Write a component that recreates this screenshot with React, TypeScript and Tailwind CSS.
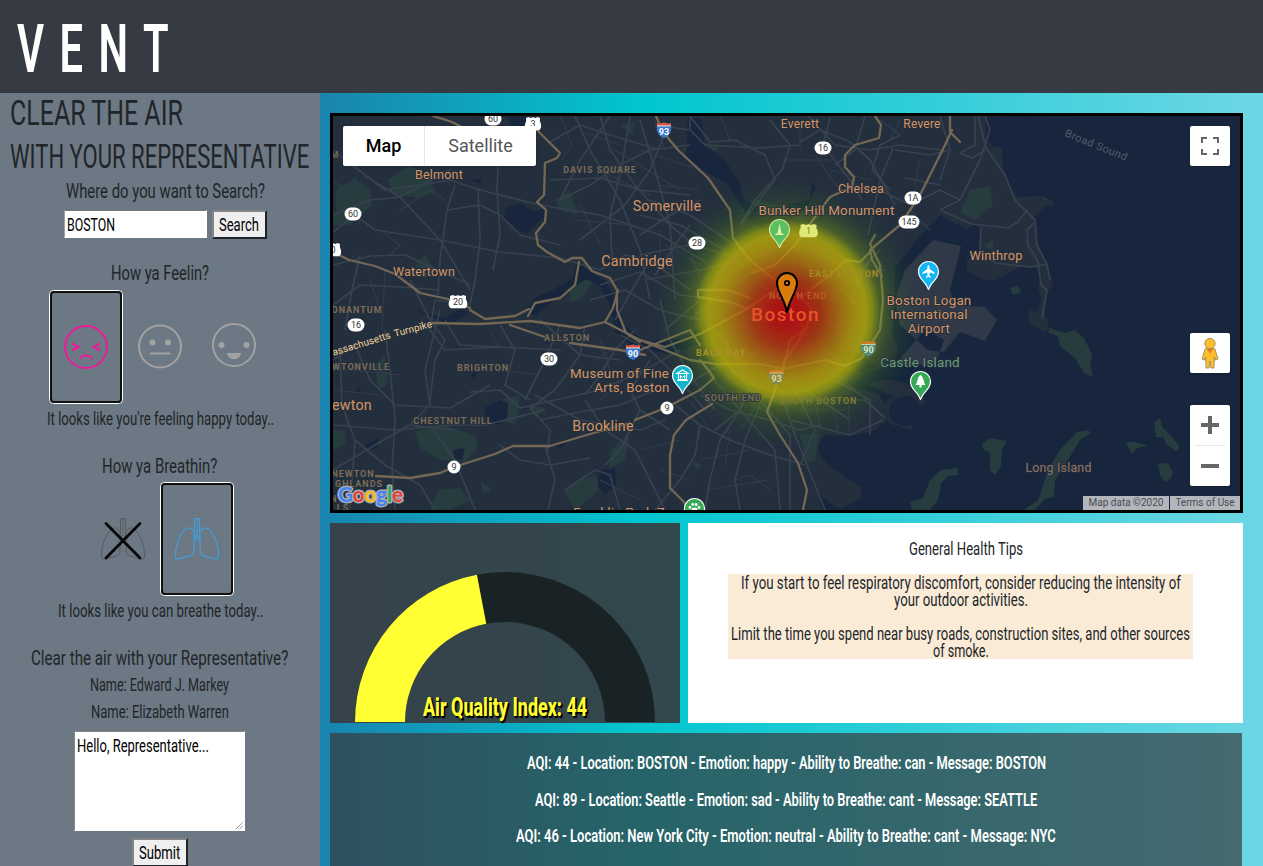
import { useLayoutEffect, useRef, type ReactNode } from 'react';

/* Condensed single-line text: squeezed horizontally to fill the width of its box. */
function Fit({ className, children }: { className: string; children: ReactNode }) {
  const box = useRef<HTMLSpanElement>(null);
  const ink = useRef<HTMLSpanElement>(null);
  useLayoutEffect(() => {
    if (box.current && ink.current) {
      ink.current.style.transform = `scaleX(${box.current.clientWidth / ink.current.offsetWidth})`;
    }
  }, []);
  return (
    <span ref={box} className={`block shrink-0 overflow-visible whitespace-nowrap ${className}`}>
      <span ref={ink} className="inline-block origin-left">
        {children}
      </span>
    </span>
  );
}

const localRoads = [
  'M333 150 L352 165 L385 190 L420 185 L450 180 L480 190 L540 205 L600 215 L660 235 L705 262',
  'M333 215 L370 200 L400 197 L450 170', 'M365 176 L400 197 L440 240 L470 290', 'M333 232 L355 215 L375 230 L440 240 L500 252 L560 258 L600 270',
  'M455 185 L447 210 L440 260 L438 295', 'M447 210 L480 205 L500 215 L520 235 L560 245', 'M478 190 L480 240 L475 280 L470 305',
  'M500 130 L497 190 L500 235 L493 270', 'M550 180 L600 178 L640 190 L690 195', 'M560 200 L590 185 L620 165 L650 150 L690 145',
  'M575 116 L590 150 L620 200 L640 250 L650 300', 'M600 116 L610 150 L635 185 L670 225 L700 250', 'M640 120 L655 170 L670 225 L675 300',
  'M550 142 L580 125 L610 135 L660 150', 'M610 116 L580 160 L560 200', 'M630 116 L622 165 L610 215 L612 260', 'M666 130 L650 170 L625 205 L580 240',
  'M655 125 L690 130 L705 145 L760 148 L800 145', 'M690 116 L710 142 L735 140 L765 155 L775 180 L740 225', 'M770 120 L790 145 L782 170 L755 200 L742 222',
  'M800 142 L820 130 L850 142 L870 160 L895 205', 'M808 116 L835 145 L870 150 L900 145 L940 150', 'M830 118 L823 145 L850 180 L862 200',
  'M865 116 L855 150 L835 165', 'M890 190 L872 170 L880 145 L900 135', 'M333 265 L370 256 L405 255 L470 285', 'M333 305 L360 285 L400 287 L440 290',
  'M360 255 L352 290 L345 330', 'M410 280 L430 320 L445 340 L435 360 L430 400', 'M470 305 L435 300 L430 330 L445 350 L500 347 L560 350',
  'M500 325 L515 350 L505 385 L530 400', 'M560 325 L545 360 L525 400', 'M585 325 L580 355 L555 390 L530 408 L550 430 L547 455',
  'M540 320 L580 355 L620 360', 'M445 320 L460 345 L500 347', 'M470 392 L500 390 L520 408 L600 390 L645 370 L680 350',
  'M333 360 L355 345 L370 380 L395 405 L450 408 L490 385', 'M340 350 L342 405 L355 440 L350 510', 'M385 330 L390 370 L395 420 L392 470 L395 510',
  'M333 425 L395 430 L450 425 L485 425 L545 410', 'M430 425 L455 460 L475 510', 'M440 310 L425 370 L430 405 L410 425',
  'M355 440 L385 465 L420 485 L435 510', 'M333 470 L375 445 L410 425 L455 430', 'M500 445 L520 460 L550 465 L590 458',
  'M545 445 L555 480 L548 510', 'M585 400 L605 430 L635 450 L650 480 L665 510', 'M540 420 L580 412 L620 405 L655 390', 'M535 395 L580 420 L640 430 L665 420',
  'M650 360 L630 390 L640 410 L670 430', 'M660 300 L670 340 L690 375 L715 410', 'M640 410 L620 450 L605 465', 'M565 490 L595 470 L610 475 L620 510',
  'M635 330 L615 350 L600 375 L585 395', 'M620 335 L650 350 L680 380 L705 410', 'M675 405 L700 425 L730 440 L770 455 L805 465',
  'M700 425 L695 455 L680 480 L655 510', 'M740 410 L720 440 L710 480 L705 510', 'M760 405 L745 440 L735 480 L740 510',
  'M715 330 L735 355 L750 385 L740 410 L715 430', 'M680 390 L710 370 L745 355 L780 350', 'M700 395 L730 410 L770 420 L800 430 L820 425',
  'M710 375 L740 410 L775 450 L780 510', 'M725 360 L755 395 L790 435 L790 510', 'M745 348 L780 390 L795 435 L825 510', 'M790 420 L850 435 L883 420',
  'M800 400 L865 400 L885 418', 'M805 390 L850 420', 'M790 380 L815 430 L800 465', 'M835 380 L870 400 L870 435', 'M640 255 L690 245 L730 255', 'M645 280 L700 270 L745 260',
  'M650 200 L690 215 L735 245', 'M640 215 L680 225 L725 250', 'M640 235 L670 215 L700 200', 'M655 275 L675 245 L690 225', 'M600 270 L625 255 L650 260 L690 290',
  'M600 285 L640 272 L680 295 L720 300', 'M590 300 L625 290 L660 310 L700 320', 'M615 320 L635 285 L650 260', 'M665 330 L700 300 L735 270 L770 250',
  'M690 320 L725 290 L760 265', 'M740 365 L765 345 L785 330 L790 290', 'M755 300 L780 300 L800 290', 'M760 285 L810 310', 'M745 318 L800 325',
  'M805 265 L840 285 L860 310', 'M820 250 L850 275 L885 270', 'M830 300 L880 250', 'M850 300 L870 260', 'M868 235 L880 180 L893 148',
  'M940 210 L960 200 L980 160 L990 130 L985 116', 'M975 116 L975 145 L960 153 L972 158 L985 150', 'M978 116 L986 148 L1005 175 L1015 200 L1035 220 L1037 245 L1047 265 L1050 280',
  'M940 210 L972 224 L1008 228 L1018 222 L1027 210', 'M981 228 L980 250 L995 263 L1030 267 L1048 264', 'M1035 222 L1027 230 L1028 245 L1038 262 L1041 285 L1047 290 L1042 318',
  'M880 190 L910 205 L940 190 L960 200', 'M905 178 L940 185', 'M895 150 L930 155 L950 150', 'M940 116 L950 150 L940 180', 'M690 130 L690 116',
];
const minorRoads = [
  'M560 116 L572 145 L562 160', 'M585 133 L620 145', 'M600 170 L650 195', 'M615 150 L680 190', 'M575 220 L630 225', 'M580 205 L600 245', 'M640 150 L700 170', 'M660 185 L700 190',
  'M660 230 L660 270', 'M685 235 L700 280', 'M665 245 L700 265', 'M690 260 L735 310', 'M700 255 L740 300', 'M716 250 L750 290', 'M730 370 L790 410', 'M720 385 L780 420',
  'M700 385 L720 400', 'M690 400 L710 430', 'M760 370 L730 400', 'M775 380 L740 430', 'M800 345 L855 390', 'M815 340 L850 370', 'M820 370 L845 345', 'M800 410 L845 410',
  'M812 395 L822 430', 'M830 395 L838 430', 'M848 400 L850 435', 'M730 430 L725 465', 'M700 460 L750 450', 'M705 490 L770 480', 'M735 480 L750 475 L770 490', 'M660 470 L690 480',
  'M640 450 L680 440', 'M600 340 L610 370', 'M620 345 L595 360', 'M635 370 L600 400', 'M350 370 L400 375', 'M333 390 L380 395', 'M370 280 L380 310', 'M385 270 L382 330',
  'M500 370 L540 375', 'M490 330 L500 350', 'M600 480 L640 500', 'M445 200 L430 190 L400 210', 'M333 180 L350 195 L360 225', 'M380 230 L400 245 L390 255', 'M655 120 L665 150', 'M720 116 L730 140',
  'M780 160 L830 160', 'M830 170 L870 180', 'M815 155 L840 190', 'M800 130 L800 150', 'M880 120 L900 135', 'M900 120 L890 140', 'M910 210 L930 230', 'M920 160 L915 185',
];
const highways = [
  'M433 116 L452 122 L470 131', 'M537 130 L560 153 L557 158 L545 163 L544 195 L537 202 L546 210 L545 222 L536 233 L538 245 L547 252 L565 262 L572 258 L582 258 L592 271 L610 278 L617 290 L617 310 L626 333 L640 342',
  'M333 252 L349 260 L375 266 L395 274 L415 289 L420 293 L448 299 L470 308', 'M579 262 L575 285 L560 298 L535 303 L528 316',
  'M433 323 L480 324 L530 321 L580 328 L605 322 L640 340 L690 360 L715 364 L760 364 L783 369 L825 360 L845 366 L862 358 L880 330 L883 300 L880 265 L870 244 L875 235',
  'M470 310 L485 319 L515 316 L529 309', 'M510 325 L545 337', 'M570 343 L620 350 L645 355', 'M605 322 L613 308 L618 290',
  'M376 476 L410 478 L440 473 L454 467 L495 454 L513 446 L550 446 L590 434 L630 423', 'M635 420 L665 408 L700 390 L714 378 L709 371 L700 360',
  'M656 116 L663 132 L678 150 L708 178 L730 210 L733 238 L750 260 L770 276 L790 290 L793 310 L805 330 L796 345 L785 360 L775 390 L767 412 L780 435 L798 463 L807 490 L803 510',
  'M712 404 L686 420 L674 435 L670 455 L670 488 L684 502 L688 510', 'M875 116 L881 125 L879 138 L855 145 L845 155 L845 167 L854 177 L852 187 L830 197 L815 217 L795 245 L775 265 L752 273',
  'M952 130 L945 145 L920 195 L900 225 L870 250 L872 260 L882 276', 'M950 116 L950 132 L960 142', 'M640 340 L665 347 L700 334 L745 310 L775 290',
  'M745 308 L730 302 L698 297 L698 290 L728 290 L750 298', 'M872 250 L860 262 L846 260 L830 275 L810 290 L800 300', 'M805 330 L812 308 L792 290', 'M783 369 L790 340 L808 327', 'M700 345 L690 330 L640 350',
];
const parks = [
  'M335 190 L355 178 L370 190 L372 205 L350 225 L337 225Z', 'M388 180 L410 165 L430 178 L435 192 L420 198 L392 194Z', 'M333 210 L350 215 L355 222 L333 226Z', 'M555 200 L570 190 L578 215 L560 210Z',
  'M620 125 L635 122 L632 135Z', 'M570 285 L585 265 L598 275 L580 300 L570 302Z', 'M415 265 L425 255 L435 270 L425 278Z', 'M415 432 L440 424 L475 435 L478 447 L465 462 L440 460 L420 448Z',
  'M333 430 L345 430 L346 445 L333 450Z', 'M375 365 L385 355 L388 385 L378 390Z', 'M438 490 L460 488 L470 500 L450 510 L430 510Z', 'M563 490 L575 482 L595 475 L600 490 L575 510Z', 'M610 452 L630 430 L625 460 L610 468Z',
  'M680 150 L700 140 L720 148 L705 155Z', 'M800 435 L820 433 L815 460 L806 465Z', 'M690 460 L702 465 L698 470Z', 'M738 210 L760 200 L780 208 L765 218Z', 'M970 190 L990 186 L993 205 L975 220 L960 212Z', 'M985 245 L993 240 L994 248 L988 250Z',
  'M1040 196 L1047 197 L1046 201Z', 'M1030 298 L1037 300 L1034 307 L1028 306Z', 'M500 400 L520 395 L515 425 L500 420Z', 'M481 480 L491 490 L482 494Z', 'M920 386 L929 390 L928 403 L921 407Z', 'M530 405 L545 408 L535 418Z',
];
const waters = [
  'M506 207 L520 203 L534 212 L545 208 L545 217 L535 225 L528 234 L518 230 L504 217Z', 'M508 116 L530 116 L525 130 L512 130Z', 'M470 180 L482 178 L481 184Z', 'M484 408 L500 400 L508 403 L507 420 L497 425 L486 418Z',
  'M453 450 L465 448 L462 460 L455 459Z', 'M365 445 L378 438 L378 448 L368 450Z', 'M356 390 L361 386 L359 395Z', 'M600 470 L615 468 L616 485 L605 495 L598 486Z', 'M553 445 L568 440 L562 448Z', 'M470 375 L478 370 L475 380Z',
];
const islands = [
  'M1050 328 L1058 331 L1066 333 L1074 330 L1084 338 L1092 355 L1090 365 L1093 377 L1084 373 L1075 358 L1060 346 L1058 336 L1048 333Z',
  'M982 444 L990 438 L1007 441 L1002 450 L1001 466 L995 475 L990 470 L990 453 L983 449Z',
  'M1077 432 L1088 430 L1091 433 L1080 440 L1071 455 L1063 468 L1055 480 L1054 497 L1045 499 L1035 510 L1024 510 L1038 500 L1048 470 L1060 450Z',
  'M1154 422 L1160 418 L1162 427 L1174 439 L1180 448 L1176 451 L1167 445 L1163 437 L1156 437Z', 'M1126 442 L1135 442 L1148 446 L1137 448 L1132 454Z', 'M1158 464 L1168 463 L1173 472 L1171 478 L1165 482 L1160 475Z',
  'M910 502 L923 498 L930 480 L940 470 L958 468 L958 475 L948 476 L941 483 L938 500 L930 510 L912 510Z', 'M1010 288 L1018 286 L1021 292 L1013 295Z',
];

type Lbl = [string, number, number, number, string?];
const towns: Lbl[] = [
  ['Everett', 800, 127.5, 12], ['Revere', 922, 127.5, 12], ['Belmont', 439, 178.5, 12.5], ['Chelsea', 861, 193, 12.5], ['Somerville', 667, 211, 14.3],
  ['Bunker Hill Monument', 826.5, 215, 13.4], ['Cambridge', 637, 266, 14.3], ['Watertown', 424, 275.5, 12.5], ['Winthrop', 996, 260, 12.8], ['Boston Logan', 929, 305, 13.4],
  ['International', 929, 319, 13.4], ['Airport', 929, 333, 13.4], ['Museum of Fine', 619.5, 378, 13.4], ['Arts, Boston', 632, 392, 13.4], ['Brookline', 603, 431, 14.3],
  ['ewton', 352, 410, 14.3], ['Franklin Park Z', 619, 517, 13.4],
];
const areas: Lbl[] = [
  ['DAVIS SQUARE', 600, 173, 9], ['M', 335, 158, 9], ['ONANTUM', 357, 313, 9], ['WTONVILLE', 361, 370, 9], ['ALLSTON', 567, 341, 9], ['BRIGHTON', 483, 371, 9],
  ['CHESTNUT HILL', 453, 424, 9], ['NEWTON', 353, 477, 9], ['GHLANDS', 359, 487, 9], ['N', 334, 502, 9], ['LS', 343, 511, 9], ['SOUTH END', 733, 401, 9],
];
const hotAreas: [string, number, number, string][] = [
  ['BACK BAY', 721, 356, '#a89028'], ['EAST BOSTON', 844, 277, '#a28a22'], ['NORTH END', 798, 299, '#b55a26'], ['SOUTH BOSTON', 818, 404, '#7d7a35'],
];
const shields: [string, number, number][] = [
  ['60', 493, 119], ['3', 533, 124], ['60', 353, 214], ['28', 697, 243], ['16', 823, 148], ['1A', 913, 198], ['145', 909, 222], ['20', 458, 302], ['16', 356, 325], ['30', 549, 359], ['9', 667, 408], ['9', 454, 467], ['0', 333, 250],
];
const interstates: [string, number, number][] = [['93', 664, 130], ['90', 633, 352]];
const hotInterstates: [string, number, number][] = [['93', 776.5, 377], ['90', 868.5, 348.5]];

function Pin({ x, y, fill, children }: { x: number; y: number; fill: string; children: ReactNode }) {
  return (
    <g transform={`translate(${x} ${y})`}>
      <path d="M0 18 L-2 14 C-4 10 -10 7 -10 0 A10 10 0 0 1 10 0 C10 7 4 10 2 14Z" fill={fill} stroke="#fff" strokeWidth="1.2" strokeLinejoin="round" />
      {children}
    </g>
  );
}

function Interstate({ x, y, label, blue, red, ink }: { x: number; y: number; label: string; blue: string; red: string; ink: string }) {
  return (
    <g transform={`translate(${x} ${y})`}>
      <path d="M-7 -5 H7 C8 1 6 6 0 8 C-6 6 -8 1 -7 -5Z" fill={blue} />
      <path d="M-7 -4 V-7 L-4 -6.500 L0 -7.500 L4 -6.500 L7 -7 V-4Z" fill={red} />
      <path d="M-7 -4 H7" stroke={ink} strokeWidth=".8" />
      <text y="4.500" fontSize="9" fontWeight="700" textAnchor="middle" fill={ink}>{label}</text>
    </g>
  );
}

const usShield = 'M-7 -6 L-4.500 -7 L-2.500 -6 L0 -6.800 L2.500 -6 L4.500 -7 L7 -6 L6.800 -3 C8.800 1 8.500 5 6 6.300 H-6 C-8.500 5 -8.800 1 -6.800 -3Z';

function CityMap() {
  return (
    <svg viewBox="333 116 907 394" className="block h-full w-full font-['Roboto',sans-serif]">
      <defs>
        <radialGradient id="heat">
          <stop offset="0" stopColor="#b80a10" stopOpacity=".95" />
          <stop offset=".12" stopColor="#b81410" stopOpacity=".9" />
          <stop offset=".26" stopColor="#b83a0c" stopOpacity=".82" />
          <stop offset=".4" stopColor="#b87a0a" stopOpacity=".8" />
          <stop offset=".5" stopColor="#bc9f08" stopOpacity=".8" />
          <stop offset=".59" stopColor="#bab008" stopOpacity=".8" />
          <stop offset=".64" stopColor="#a8b008" stopOpacity=".68" />
          <stop offset=".7" stopColor="#84a80c" stopOpacity=".38" />
          <stop offset=".82" stopColor="#4c8c12" stopOpacity=".17" />
          <stop offset="1" stopColor="#206010" stopOpacity="0" />
        </radialGradient>
      </defs>
      <rect x="333" y="116" width="907" height="394" fill="#242f3e" />
      <g fill="#263c3f">{parks.map((d) => <path key={d} d={d} />)}</g>
      <g fill="#17263c">
        <path d="M985 116 L987 140 L993 147 L1002 148 L1003 168 L1012 190 L1018 197 L1040 196 L1053 200 L1054 205 L1044 207 L1034 217 L1038 245 L1048 265 L1053 284 L1044 298 L1045 315 L1050 330 L1240 330 L1240 116Z" />
        <path d="M940 215 L966 229 L975 224 L980 228 L979 250 L967 260 L967 270 L984 280 L994 281 L1010 272 L1023 266 L1035 268 L1042 276 L1038 288 L1042 300 L1035 316 L1042 326 L1050 330 L1240 330 L1240 510 L822 510 L817 492 L830 503 L840 509 L861 498 L861 487 L848 479 L842 474 L829 466 L820 455 L818 445 L825 435 L852 436 L875 430 L888 420 L887 407 L878 394 L850 387 L865 372 L892 366 L898 350 L892 330 L895 300 L895 268 L918 238Z" />
        <path d="M688 116 L702 120 L705 145 L725 160 L738 180 L745 200 L775 215 L790 204 L810 200 L812 182 L816 187 L808 207 L789 220 L790 245 L805 265 L817 288 L821 310 L841 342 L877 367 L862 373 L833 354 L813 343 L804 320 L789 290 L779 265 L770 235 L750 220 L739 203 L728 184 L703 170 L686 157Z" />
        <path d="M525 311 L536 297 L553 290 L573 278 L577 262 L584 267 L605 281 L618 302 L624 325 L645 342 L682 339 L708 322 L744 300 L758 285 L765 289 L742 312 L705 341 L672 354 L635 348 L616 333 L609 303 L600 286 L586 279 L555 300 L535 316Z" />
        <path d="M415 310 L445 318 L460 309 L469 313 L450 325Z" />
        {waters.map((d) => <path key={d} d={d} />)}
      </g>
      <path d="M933 240 L961 246 L950 290 L955 305 L985 307 L997 320 L985 341 L960 332 L944 352 L928 350 L900 325 L895 300 L905 270 Z M895 365 L935 365 L944 340 L925 329Z" fill="#2f3948" />
      <path d="M868 385 C875 378 900 377 920 391 L926 402 L914 411 L912 430 L890 424 C882 410 882 400 895 397 Z" fill="#242f3e" />
      <ellipse cx="905" cy="411" rx="16" ry="15" fill="#17263c" />
      <path d="M1028 310 L1040 312 L1050 328 L1045 332 L1031 325Z" fill="#242f3e" />
      <g fill="#263c3f">{islands.map((d) => <path key={d} d={d} />)}</g>
      <g fill="none" stroke="#323c4a" strokeWidth="1.1">{minorRoads.map((d) => <path key={d} d={d} />)}</g>
      <g fill="none" stroke="#38414e" strokeWidth="1.7" strokeLinejoin="round">{localRoads.map((d) => <path key={d} d={d} />)}</g>
      <g fill="none" stroke="#746855" strokeWidth="2.3" strokeLinejoin="round" strokeLinecap="round">{highways.map((d) => <path key={d} d={d} />)}</g>
      <circle cx="787" cy="313" r="134" fill="url(#heat)" />
      <g fill="#7b6c56" fontSize="9" fontWeight="700" letterSpacing=".95" textAnchor="middle">
        <g stroke="#242f3e" strokeWidth="1.5" paintOrder="stroke">
          {areas.map(([t, x, y]) => <text key={t} x={x} y={y}>{t}</text>)}
        </g>
        {hotAreas.map(([t, x, y, c]) => <text key={t} x={x} y={y} fill={c}>{t}</text>)}
      </g>
      <g fill="#d59563" textAnchor="middle" stroke="#242f3e" strokeWidth="1.5" paintOrder="stroke" letterSpacing=".2">
        {towns.map(([t, x, y, s]) => <text key={t} x={x} y={y} fontSize={s}>{t}</text>)}
        <text x="785.500" y="321" fontSize="19" fontWeight="500" letterSpacing="1.5" fill="#e8542a" stroke="none">Boston</text>
        <text x="920" y="367" fontSize="13.400" fill="#6b9a76">Castle Island</text>
        <text x="1058.500" y="472" fontSize="12.400" fill="#8f7163">Long Island</text>
      </g>
      <text x="1064" y="136" fontSize="11" fill="#515c6d" letterSpacing=".35" transform="rotate(22 1064 136)">Broad Sound</text>
      <text x="331" y="356.500" fontSize="10" fill="#f3d19c" transform="rotate(-17 331 356.500)" textLength="63">lassachusetts</text>
      <text x="395" y="337" fontSize="10" fill="#f3d19c" transform="rotate(-15 395 337)" textLength="39">Turnpike</text>
      {shields.map(([t, x, y]) => {
        const w = t.length * 4 + 9;
        return (
          <g key={`${t}${x}`} transform={`translate(${x} ${y})`}>
            {['20', '0', '3'].includes(t) ? <path d={usShield} fill="#fff" transform={t === '20' ? 'scale(1.15 1)' : undefined} /> : <rect x={-w / 2} y={-6.500} width={w} height="13" rx="6.500" fill="#fff" />}
            <text y={3.300} fontSize="9" textAnchor="middle" fill="#333">{t}</text>
          </g>
        );
      })}
      {interstates.map(([t, x, y]) => <Interstate key={x} x={x} y={y} label={t} blue="#3a76c9" red="#d8574c" ink="#fff" />)}
      {hotInterstates.map(([t, x, y]) => <Interstate key={x} x={x} y={y} label={t} blue={t === '93' ? '#7f8a5c' : '#4f8a85'} red="#cf7a25" ink={t === '93' ? '#e6d878' : '#dbe6b0'} />)}
      <g transform="translate(808.500 231)">
        <path d={usShield} fill="#e2e878" transform="scale(1.15 1)" />
        <text y="3.300" fontSize="9" textAnchor="middle" fill="#7a8030">1</text>
      </g>
      <g transform="translate(779.500 229.500)">
        <path d="M0 18 L-2 14 C-4 10 -10 7 -10 0 A10 10 0 0 1 10 0 C10 7 4 10 2 14Z" fill="#5abf5e" stroke="#d3e6a0" strokeWidth="1.200" strokeLinejoin="round" />
        <path d="M0 -6 L1 -1 L2 4 H4 V5.500 H-4 V4 H-2 L-1 -1Z" fill="#e6f0a8" />
      </g>
      <Pin x={928.500} y={271.500} fill="#12b5f5">
        <path d="M0 -6.500 C1 -6.500 1.200 -4 1.200 -2.500 L6 1 V2.500 L1.200 1 L1 4 L2.500 5.300 V6.300 L0 5.600 L-2.500 6.300 V5.300 L-1 4 L-1.200 1 L-6 2.500 V1 L-1.200 -2.500 C-1.200 -4 -1 -6.500 0 -6.500Z" fill="#fff" />
      </Pin>
      <Pin x={682.500} y={375.500} fill="#12b5cb">
        <path d="M-5.500 -2 L0 -5.500 L5.500 -2Z M-4 -1.500 V4 H4 V-1.500 M-5.500 5 H5.500" fill="none" stroke="#fff" strokeWidth="1.2" />
        <path d="M-2 3 V0 L0 2 L2 0 V3" fill="none" stroke="#fff" strokeWidth="1" />
      </Pin>
      <Pin x={920.500} y={381.500} fill="#34a853">
        <path d="M0 -7 L3 -3 H2 L4 0 H3 L5 3.500 H1 V6 H-1 V3.500 H-5 L-3 0 H-4 L-2 -3 H-3Z" fill="#fff" />
      </Pin>
      <Pin x={694.500} y={508.500} fill="#34a853">
        <g fill="#fff"><circle cx="-4.500" cy="-1" r="1.400" /><circle cx="-1.700" cy="-4" r="1.400" /><circle cx="1.700" cy="-4" r="1.400" /><circle cx="4.500" cy="-1" r="1.400" /><ellipse cy="1.500" rx="3" ry="2.500" /></g>
      </Pin>
      <path d="M787 313 C786 302 777 292 777 283 A10 10 0 0 1 797 283 C797 292 788 302 787 313Z" fill="#da7b0e" stroke="#000" strokeWidth="2" />
      <circle cx="787" cy="283" r="2.200" fill="#da7b0e" stroke="#000" strokeWidth="1.800" />
      <text x="338" y="502" fontSize="20.500" fontWeight="700" textLength="65" className="font-['Lato',sans-serif]" stroke="#a9adb5" strokeWidth="3" strokeLinejoin="round" paintOrder="stroke">
        <tspan fill="#4285f4">G</tspan><tspan fill="#ea4335">o</tspan><tspan fill="#fbbc05">o</tspan><tspan fill="#4285f4">g</tspan><tspan fill="#34a853">l</tspan><tspan fill="#ea4335">e</tspan>
      </text>
    </svg>
  );
}

function MapPanel() {
  return (
    <section className="relative h-[400px] w-[913px] overflow-hidden border-[3px] border-black bg-[#242f3e] font-['Roboto',sans-serif]">
      <CityMap />
      <div className="absolute left-[10px] top-[10px] flex h-10 w-[193px] items-center rounded-[2px] bg-white text-lg leading-10 shadow">
        <span className="w-[82px] border-r border-[#e6e6e6] text-center font-medium text-black">Map</span>
        <span className="flex-1 text-center text-[#565656]">Satellite</span>
      </div>
      <div className="absolute right-[10px] top-[10px] flex size-10 items-center justify-center rounded-[2px] bg-white shadow">
        <svg viewBox="0 0 18 18" className="size-[18px]" fill="#666"><path d="M0 0V6H2V2H6V0Z M16 0H12V2H16V6H18V0Z M16 16H12V18H18V12H16Z M2 12H0V18H6V16H2Z" /></svg>
      </div>
      <div className="absolute right-[10px] top-[217px] flex size-10 items-center justify-center rounded-[2px] bg-white shadow">
        <svg viewBox="0 0 18 32" className="h-8 w-[18px]">
          <path d="M4 12 Q9 8 14 12 L17 22 L14.500 23 L13.500 20 L13 31 H10 L9 24 L8 31 H5 L4.500 20 L3.500 23 L1 22Z" fill="#fbbf2c" stroke="#948260" strokeWidth=".8" />
          <path d="M5.500 11.500 H12.500 L9 16.500Z" fill="#e2792c" />
          <circle cx="9" cy="6.500" r="5.200" fill="#fbbf2c" stroke="#948260" strokeWidth=".8" />
        </svg>
      </div>
      <div className="absolute right-[10px] top-[289px] flex h-[81px] w-10 flex-col items-center rounded-[2px] bg-white shadow">
        <svg viewBox="0 0 40 40" className="size-10"><path d="M11 20H29M20 11V29" stroke="#666" strokeWidth="4" /></svg>
        <div className="h-px w-[30px] bg-[#e6e6e6]" />
        <svg viewBox="0 0 40 40" className="size-10"><path d="M11 20H29" stroke="#666" strokeWidth="4" /></svg>
      </div>
      <div className="absolute bottom-0 right-0 flex h-[14px] gap-px text-center text-[10px] leading-[14px] text-[#4a4c51]">
        <span className="w-[86px] bg-[#b3b7bd]">Map data ©2020</span>
        <span className="w-[70px] bg-[#b3b7bd]">Terms of Use</span>
      </div>
    </section>
  );
}

const frame = (
  <g fill="none">
    <rect x=".5" y=".5" width="73" height="113" rx="4" stroke="#fff" />
    <rect x="2" y="2" width="70" height="110" rx="3" stroke="#101010" strokeWidth="2" />
  </g>
);

function Lungs({ color, width }: { color: string; width: number }) {
  const half = 'M34 51 C33 47 31 45.500 28 46 C20 49 15 65 15.500 75 C15.500 77 17 77 19 77 C24 75 29 75 32 73 C34 71 34 70 34 67Z';
  return (
    <g fill="none" stroke={color} strokeWidth={width}>
      <path d={half} />
      <path d={half} transform="matrix(-1 0 0 1 74 0)" />
      <path d="M34.500 55 V36.500 H39.500 V55 M34.500 38 H39.500 M37 40 V52 M33.500 57 L37 53 L40.500 57 M34 60 L37 56 L40 60" />
    </g>
  );
}

function Gauge() {
  return (
    <section className="relative h-[200px] w-[350px] bg-gradient-to-r from-[#36424a] to-[#31484d]">
      <svg viewBox="0 0 350 200" className="block h-full w-full">
        <path d="M25 199 A150 150 0 0 1 325 199 H275 A100 100 0 0 0 75 199Z" fill="#192225" />
        <path d="M25 199 A150 150 0 0 1 146.900 51.660 L156.260 100.770 A100 100 0 0 0 75 199Z" fill="#ffff33" />
      </svg>
      <div className="absolute inset-x-0 bottom-[3px] flex justify-center">
        <Fit className="w-[164px] text-[26px] font-extrabold leading-[26px] text-[#ffff33] [text-shadow:2px_1px_1px_#000,2px_2px_1px_#000]">Air Quality Index: 44</Fit>
      </div>
    </section>
  );
}

export default function App() {
  return (
    <div className="flex h-[866px] w-[1263px] flex-col overflow-hidden bg-[#343a40] font-['Roboto',sans-serif] text-[#212529]">
      <header className="flex h-[93px] shrink-0 items-center bg-[#363a42] pl-[17px] pt-1">
        <Fit className="w-[167px] text-[67.5px] font-semibold leading-[80px] tracking-[25px] text-white">VENT</Fit>
      </header>
      <div className="flex min-h-0 flex-1">
        <aside className="flex w-80 shrink-0 flex-col items-center bg-[#6c7883] text-[18.5px] font-[450]">
          <h1 className="flex w-full flex-col pl-[10px]">
            <Fit className="h-10 w-[173px] text-[35.5px] leading-[41px]">CLEAR THE AIR</Fit>
            <Fit className="h-[46px] w-[299px] text-[34px] leading-[46px]">WITH YOUR REPRESENTATIVE</Fit>
          </h1>
          <Fit className="ml-[10px] h-[31px] w-[199px] text-[20px] leading-[24px]">Where do you want to Search?</Fit>
          <div className="flex w-full gap-[5px] pl-16">
            <div className="h-[28px] w-[143px] border border-white border-l-[#a0a0a0] border-t-[#767676] bg-white pl-[2px] text-black">
              <Fit className="w-[48px] leading-[28px]">BOSTON</Fit>
            </div>
            <button className="h-[29px] w-[55px] border-2 border-b-[#202328] border-l-[#858585] border-r-[#202328] border-t-[#858585] bg-[#efefef] pl-[5px] text-black">
              <Fit className="w-[40px] leading-[26px]">Search</Fit>
            </button>
          </div>
          <Fit className="mt-[22px] w-[98px] text-[20px] leading-[25px]">How ya Feelin?</Fit>
          <div className="mt-1 flex h-[114px]">
            <svg viewBox="0 0 74 114" className="h-[114px] w-[74px]">
              {frame}
              <g fill="none" stroke="#ee1a9c" strokeWidth="2">
                <circle cx="37" cy="57" r="21" />
                <path d="M23 53.500 L29.500 57 L23 60.500 M51 53.500 L44.500 57 L51 60.500 M31 69.500 C32 64 42 64 43 69.500" />
              </g>
            </svg>
            <svg viewBox="0 0 74 114" className="h-[114px] w-[74px]">
              <circle cx="37" cy="56.500" r="21" fill="none" stroke="#a2a2a2" strokeWidth="2" />
              <g fill="#a2a2a2"><circle cx="29.500" cy="52.500" r="3" /><circle cx="45" cy="52.500" r="3" /></g>
              <path d="M27 63.500H47.500" stroke="#a2a2a2" strokeWidth="2" />
            </svg>
            <svg viewBox="0 0 74 114" className="h-[114px] w-[74px]">
              <circle cx="37" cy="55" r="21" fill="none" stroke="#a2a2a2" strokeWidth="2" />
              <g fill="#a2a2a2"><circle cx="24.500" cy="55" r="3" /><circle cx="49.500" cy="55" r="3" /><path d="M30 63H44C43 71 31 71 30 63Z" /></g>
            </svg>
          </div>
          <Fit className="mt-[3px] w-[227px] leading-[25px]">It looks like you're feeling happy today..</Fit>
          <Fit className="mr-px mt-[22px] w-[115px] text-[20px] leading-[24px]">How ya Breathin?</Fit>
          <div className="mt-1 flex h-[114px]">
            <svg viewBox="0 0 74 114" className="h-[114px] w-[74px]">
              <Lungs color="#555c63" width={1} />
              <path d="M20 41.500 L54 76 M54 41.500 L20 76" stroke="#080808" strokeWidth="2.800" strokeLinecap="round" />
            </svg>
            <svg viewBox="0 0 74 114" className="h-[114px] w-[74px]">
              {frame}
              <Lungs color="#429dda" width={1.200} />
            </svg>
          </div>
          <Fit className="mt-[3px] w-[205px] leading-[25px]">It looks like you can breathe today..</Fit>
          <Fit className="mr-px mt-[22px] w-[257px] text-[20px] leading-[24px]">Clear the air with your Representative?</Fit>
          <Fit className="mr-px mt-[2px] w-[139px] leading-[27px]">Name: Edward J. Markey</Fit>
          <Fit className="w-[138px] leading-[27px]">Name: Elizabeth Warren</Fit>
          <div className="mr-[2px] mt-[5px] flex h-[100px] w-[171px] shrink-0 items-start justify-between border border-[#858585] border-b-white border-r-white bg-white pl-[2px] text-black">
            <Fit className="w-[132px] leading-[28px]">Hello, Representative...</Fit>
            <svg viewBox="0 0 10 10" className="size-[9px] self-end"><path d="M1 9L9 1M5 9L9 5" stroke="#555" strokeWidth="1" strokeDasharray="1.2 .6" /></svg>
          </div>
          <button className="mt-[7px] h-[29px] w-[56px] shrink-0 border-2 border-b-[#202328] border-l-[#858585] border-r-[#202328] border-t-[#858585] bg-[#efefef] pl-[5px] text-black">
            <Fit className="w-[41px] leading-[24px]">Submit</Fit>
          </button>
        </aside>
        <main className="flex flex-1 flex-col gap-[10px] bg-[linear-gradient(90deg,#1a84af_0%,#00c6cf_34%,#6dd7e4_100%)] pl-[10px] pt-5">
          <MapPanel />
          <div className="flex gap-2">
            <Gauge />
            <section className="flex h-[200px] w-[555px] flex-col items-center bg-white pt-[13px] text-[18.5px]">
              <Fit className="w-[114px] leading-[26px]">General Health Tips</Fit>
              <div className="mr-[10px] mt-[12px] flex h-[85px] w-[465px] flex-col items-center bg-[#faebd7]">
                <Fit className="w-[440px] leading-[18px]">If you start to feel respiratory discomfort, consider reducing the intensity of</Fit>
                <Fit className="w-[134px] leading-[17px]">your outdoor activities.</Fit>
                <Fit className="mt-[17px] w-[459px] leading-[17px]">Limit the time you spend near busy roads, construction sites, and other sources</Fit>
                <Fit className="w-[56px] leading-[17px]">of smoke.</Fit>
              </div>
            </section>
          </div>
          <section className="flex h-[133px] w-[912px] flex-col items-center bg-[linear-gradient(90deg,#2f5060_0%,#266469_34%,#456a70_100%)] pt-3 text-[18.5px] font-semibold text-white">
            <Fit className="w-[519px] leading-[37px]">AQI: 44 - Location: BOSTON - Emotion: happy - Ability to Breathe: can - Message: BOSTON</Fit>
            <Fit className="w-[502px] leading-[36px]">AQI: 89 - Location: Seattle - Emotion: sad - Ability to Breathe: cant - Message: SEATTLE</Fit>
            <Fit className="w-[540px] leading-[36px]">AQI: 46 - Location: New York City - Emotion: neutral - Ability to Breathe: cant - Message: NYC</Fit>
          </section>
        </main>
      </div>
    </div>
  );
}
